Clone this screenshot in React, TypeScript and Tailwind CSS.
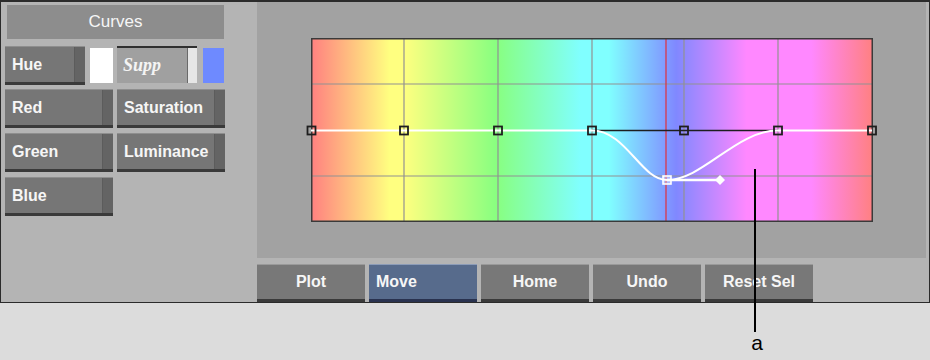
import React from "react";

const sans = "font-['Liberation_Sans',Arial,sans-serif]";

function SideButton({ label, wide = true }: { label: string; wide?: boolean }) {
  return (
    <div
      className={`flex h-[39px] ${wide ? "w-[108px]" : "w-[80px]"} border-t border-t-[#8e8e8e] border-b-[3px] border-b-[#3a3a3a] bg-[#767676]`}
    >
      <span className={`flex flex-1 items-center pl-[7px] pt-[1px] text-[16px] font-bold text-[#f6f6f6] ${sans}`}>
        {label}
      </span>
      <span className="w-[11px] border-l border-l-[#5c5c5c] bg-[#646464]" />
    </div>
  );
}

function BottomButton({ label, active = false }: { label: string; active?: boolean }) {
  return (
    <div
      className={`flex h-[38px] w-[108px] items-center border-t border-b-[3px] text-[16px] font-bold text-[#f6f6f6] ${sans} ${
        active
          ? "justify-start border-t-[#8c9cb8] border-b-[#29324f] bg-[#576b8c] pl-[7px]"
          : "justify-center border-t-[#9a9a9a] border-b-[#3a3a3a] bg-[#787878]"
      }`}
    >
      {label}
    </div>
  );
}

function CurveGraph() {
  const cols = [93, 187, 281, 373, 467];
  const rows = [46, 138];
  const points = [0.5, 93, 187, 281, 373, 467, 561];
  return (
    <svg width="562" height="184" viewBox="0 0 562 184" className="block overflow-visible">
      <defs>
        <linearGradient id="hue" x1="0" x2="1" y1="0" y2="0">
          <stop offset="0" stopColor="#ff8080" />
          <stop offset="0.14" stopColor="#ffff80" />
          <stop offset="0.165" stopColor="#ffff80" />
          <stop offset="0.33" stopColor="#88ff80" />
          <stop offset="0.48" stopColor="#80ffff" />
          <stop offset="0.53" stopColor="#80ffff" />
          <stop offset="0.65" stopColor="#8088ff" />
          <stop offset="0.775" stopColor="#ff88ff" />
          <stop offset="0.89" stopColor="#ff88ff" />
          <stop offset="1" stopColor="#ff8080" />
        </linearGradient>
      </defs>
      <rect x="0" y="0" width="562" height="184" fill="url(#hue)" />
      {cols.map((x) => (
        <line key={x} x1={x} x2={x} y1="0" y2="184" stroke="#929292" strokeWidth="1.2" />
      ))}
      {rows.map((y) => (
        <line key={y} x1="0" x2="562" y1={y} y2={y} stroke="#929292" strokeWidth="1.2" />
      ))}
      <line x1="355" x2="355" y1="0" y2="184" stroke="#e0303a" strokeWidth="1.2" />
      <rect x="0.75" y="0.75" width="560.5" height="182.5" fill="none" stroke="#3a3a3a" strokeWidth="1.5" />
      <line x1="281" x2="467" y1="92.5" y2="92.5" stroke="#1e1e1e" strokeWidth="1.6" />
      <path
        d="M0 92.5 H281 C315 92.5 330 142 356 142 C392 142 425 92.5 467 92.5 H561"
        fill="none"
        stroke="#ffffff"
        strokeWidth="2"
      />
      <line x1="356" x2="407" y1="142" y2="142" stroke="#ffffff" strokeWidth="2.5" />
      <path d="M409 137 L414 142 L409 147 L404 142 Z" fill="#ffffff" />
      {points.map((x) => (
        <rect
          key={x}
          x={x - 4}
          y="88.5"
          width="8"
          height="8"
          fill="none"
          stroke="#1e1e1e"
          strokeWidth="1.8"
        />
      ))}
      <rect x="352" y="138" width="8" height="8" fill="rgba(255,255,255,0.35)" stroke="#ffffff" strokeWidth="1.6" />
    </svg>
  );
}

export default function App() {
  return (
    <div className="relative h-[360px] w-[930px] overflow-hidden bg-[#dcdcdc]">
      <div className="flex h-[303px] border-t-2 border-b border-l border-r border-[#2b2b2b] bg-[#b4b4b4] pr-[3px]">
        {/* left column */}
        <div className="flex w-[256px] flex-col pl-[4px]">
          <div
            className={`ml-[2px] mt-[3px] flex h-[34px] w-[217px] items-center justify-center bg-[#8d8d8d] text-[17px] text-[#f6f6f6] ${sans}`}
          >
            Curves
          </div>
          <div className="mt-[7px] flex h-[39px] items-start">
            <SideButton label="Hue" wide={false} />
            <div className="ml-[5px] mt-[2px] h-[35px] w-[23px] bg-white" />
            <div className="ml-[4px] flex h-[37px] w-[80px] border-t-2 border-t-[#303030] bg-[#a0a0a0]">
              <span className="flex flex-1 items-center pl-[6px] font-['Liberation_Serif',serif] text-[18px] font-bold italic text-[#f4f4f4]">
                Supp
              </span>
              <span className="w-[10px] border-l border-l-[#6a6a6a] bg-[#e6e6e6]" />
            </div>
            <div className="ml-[6px] mt-[2px] h-[35px] w-[21px] bg-[#6e8aff]" />
          </div>
          <div className="mt-[4px] grid w-[220px] grid-cols-2 gap-x-[4px] gap-y-[5px]">
            <SideButton label="Red" />
            <SideButton label="Saturation" />
            <SideButton label="Green" />
            <SideButton label="Luminance" />
            <SideButton label="Blue" />
          </div>
        </div>

        {/* right column */}
        <div className="flex w-[669px] flex-col">
          <div className="h-[256px] bg-[#a2a2a2] pl-[54px] pt-[36px]">
            <CurveGraph />
          </div>
          <div className="mt-[6px] flex gap-[4px]">
            <BottomButton label="Plot" />
            <BottomButton label="Move" active />
            <BottomButton label="Home" />
            <BottomButton label="Undo" />
            <BottomButton label="Reset Sel" />
          </div>
        </div>
      </div>

      {/* callout */}
      <div className="absolute left-[754px] top-[169px] h-[163px] w-[2px] bg-black" />
      <span className="absolute left-[746px] top-[332px] w-[22px] text-center font-['Liberation_Sans',Arial,sans-serif] text-[21px] leading-[21px] text-black">
        a
      </span>
    </div>
  );
}
